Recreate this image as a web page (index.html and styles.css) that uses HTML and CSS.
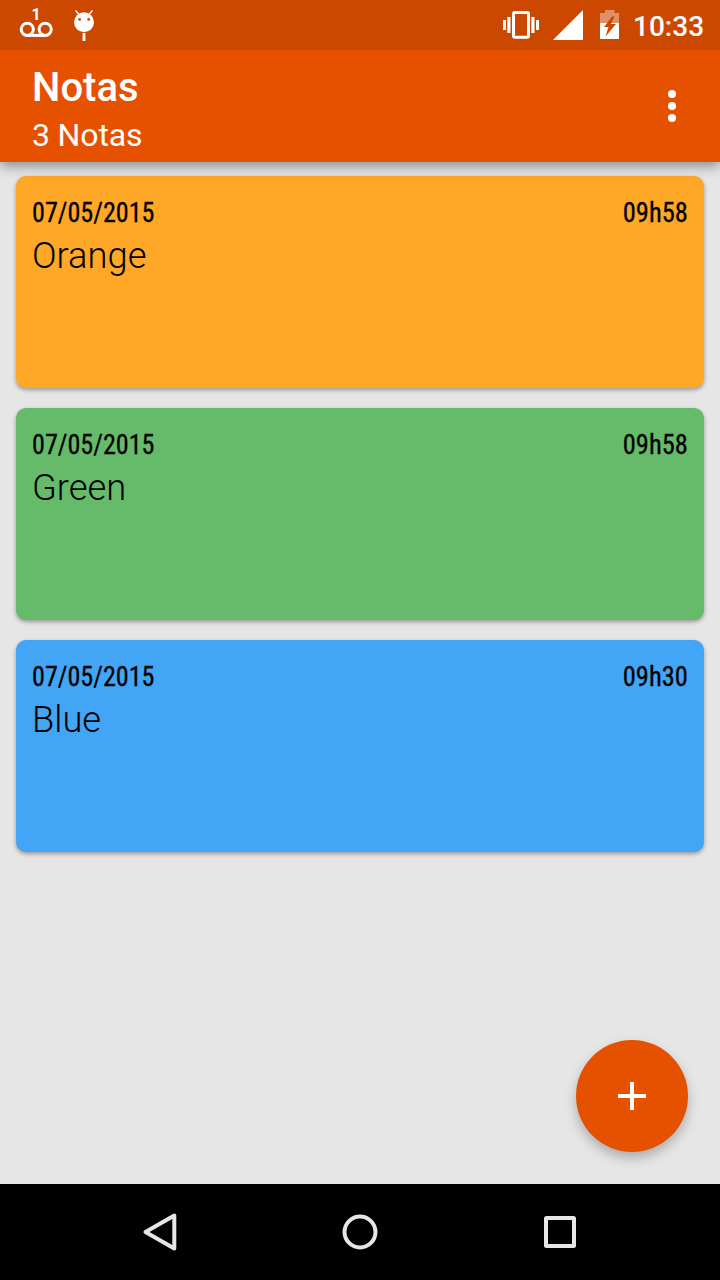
FILE: index.html
```html
<!DOCTYPE html>
<html lang="pt">
<head>
  <meta charset="UTF-8">
  <meta name="viewport" content="width=device-width, initial-scale=1.0">
  <title>Notas</title>
  <link rel="stylesheet" href="styles.css">
</head>
<body>
  <div class="status-bar">
    <svg class="icon-voicemail" width="34" height="50" viewBox="19 0 34 50">
      <g fill="none" stroke="#fff" stroke-width="3">
        <circle cx="27.3" cy="29.3" r="6.1"/>
        <circle cx="45.2" cy="29.3" r="6.1"/>
        <path d="M27.3 35.4H45.2"/>
      </g>
      <text class="badge" x="31.5" y="20">1</text>
    </svg>
    <svg class="icon-debug" width="22" height="50" viewBox="73 0 22 50">
      <path d="M75.5 10.5l4 4.5M92.5 10.5l-4 4.5" stroke="#fff" stroke-width="1.5"/>
      <circle cx="84" cy="22.3" r="10" fill="#fff"/>
      <circle cx="79.6" cy="19.4" r="1.4" fill="#cc4700"/>
      <circle cx="88.7" cy="19.4" r="1.4" fill="#cc4700"/>
      <path d="M84 33v8" stroke="#fff" stroke-width="2.8"/>
    </svg>
    <div class="status-right">
      <svg width="36" height="50" viewBox="503 0 36 50">
        <rect x="513.5" y="12.5" width="15" height="24.8" rx="1.5" fill="none" stroke="#fff" stroke-width="3"/>
        <path d="M503 20h3v10h-3zM507.3 17h3.2v16h-3.2zM531.3 17h3.2v16h-3.2zM536 20h3v10h-3z" fill="#fff"/>
      </svg>
      <svg class="icon-signal" width="30" height="50" viewBox="553 0 30 50">
        <path d="M583 10v30h-30z" fill="#fff"/>
      </svg>
      <svg class="icon-battery" width="20" height="50" viewBox="600 0 20 50">
        <path d="M600 13h5v-3h9.5v3h4.5v10h-19z" fill="#fff" fill-opacity=".4"/>
        <path d="M600 23h19v16h-19z" fill="#fff"/>
        <path d="M612 16.5l-8 10.5h4.5l-3 9.5 10.5-12.5h-5l3.5-7.5z" fill="#cc4700"/>
      </svg>
      <span class="clock">10:33</span>
    </div>
  </div>

  <header class="toolbar">
    <div>
      <h1>Notas</h1>
      <p>3 Notas</p>
    </div>
    <svg width="8" height="32" viewBox="0 0 8 32" fill="#fff">
      <circle cx="4" cy="4" r="4"/>
      <circle cx="4" cy="16" r="4"/>
      <circle cx="4" cy="28" r="4"/>
    </svg>
  </header>

  <main class="notes">
    <div class="note orange">
      <div class="note-info"><span class="date">07/05/2015</span><span class="time">09h58</span></div>
      <h2>Orange</h2>
    </div>
    <div class="note green">
      <div class="note-info"><span class="date">07/05/2015</span><span class="time">09h58</span></div>
      <h2>Green</h2>
    </div>
    <div class="note blue">
      <div class="note-info"><span class="date">07/05/2015</span><span class="time">09h30</span></div>
      <h2>Blue</h2>
    </div>
    <button class="add">
      <svg width="28" height="28" viewBox="0 0 28 28"><path d="M14 0v28M0 14h28" stroke="#fff" stroke-width="4"/></svg>
    </button>
  </main>

  <nav class="nav-bar">
    <svg width="40" height="40" viewBox="0 0 40 40"><path d="M34.3 3.6v33L5.5 20z"/></svg>
    <svg width="40" height="40" viewBox="0 0 40 40"><circle cx="20" cy="20" r="15.5"/></svg>
    <svg width="40" height="40" viewBox="0 0 40 40"><rect x="6" y="6" width="28" height="28" rx=".5"/></svg>
  </nav>
</body>
</html>
```

FILE: styles.css
```css
* {
  box-sizing: border-box;
}

body {
  margin: 0;
  height: 1280px;
  display: flex;
  flex-direction: column;
  font-family: Roboto, sans-serif;
  background-color: #e6e6e6;
  overflow: hidden;
}

h1, h2, p {
  margin: 0;
}

svg {
  display: block;
}

.status-bar {
  position: relative;
  z-index: 2;
  display: flex;
  height: 50px;
  padding: 0 16px 0 19px;
  background-color: #cc4700;
  color: white;
}

.badge {
  font-size: 16px;
  font-weight: bold;
  fill: white;
}

.icon-debug {
  margin-left: 20px;
}

.status-right {
  display: flex;
  margin-left: auto;
}

.icon-signal {
  margin-left: 14px;
}

.icon-battery {
  margin-left: 17px;
}

.clock {
  margin-left: 13px;
  width: 71px;
  font-size: 28px;
  font-weight: 500;
  line-height: 54px;
}

.toolbar {
  position: relative;
  display: flex;
  justify-content: space-between;
  align-items: center;
  height: 112px;
  padding: 0 44px 0 32px;
  background-color: #e65100;
  color: white;
  box-shadow: 0 4px 12px rgba(0, 0, 0, 0.4);
  z-index: 1;
}

.toolbar h1 {
  padding-top: 11px;
  font-size: 40px;
  font-weight: 500;
  line-height: 48px;
}

.toolbar p {
  font-size: 32px;
  line-height: 47px;
  letter-spacing: -0.15px;
}

.notes {
  position: relative;
  flex: 1;
  display: flex;
  flex-direction: column;
  gap: 20px;
  padding: 14px 16px;
}

.note {
  height: 212px;
  padding: 16px;
  border-radius: 10px;
  color: black;
  box-shadow: 0 2px 4px rgba(0, 0, 0, 0.35);
}

.note-info {
  display: flex;
  justify-content: space-between;
  font-family: "Roboto Condensed", Roboto, sans-serif;
  font-size: 28px;
  line-height: 42px;
  -webkit-text-stroke: 0.3px black;
}

.date {
  transform: scaleX(0.932);
  transform-origin: left;
}

.time {
  transform: scaleX(0.945);
  transform-origin: right;
}

.note h2 {
  font-size: 36.3px;
  font-weight: 300;
  line-height: 43px;
}

.orange {
  background-color: #ffa726;
}

.green {
  background-color: #66bb6a;
}

.blue {
  background-color: #42a5f5;
}

.add {
  position: absolute;
  right: 32px;
  bottom: 32px;
  display: flex;
  align-items: center;
  justify-content: center;
  width: 112px;
  height: 112px;
  padding: 0;
  border: none;
  border-radius: 50%;
  background-color: #e65100;
  box-shadow: 0 6px 12px rgba(0, 0, 0, 0.25);
}

.nav-bar {
  display: flex;
  justify-content: center;
  align-items: center;
  gap: 160px;
  height: 96px;
  background-color: black;
}

.nav-bar svg {
  fill: none;
  stroke: #e6e6e6;
  stroke-width: 4;
  stroke-linejoin: round;
}
```
